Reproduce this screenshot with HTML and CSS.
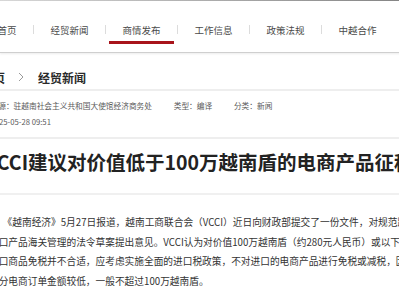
FILE: index.html
```html
<!DOCTYPE html>
<html lang="zh-CN">
<head>
<meta charset="utf-8">
<title>VCCI建议对价值低于100万越南盾的电商产品征税</title>
<link rel="stylesheet" href="styles.css">
</head>
<body>
<div class="topline"></div>
<nav class="nav">
  <div class="nav-inner">
    <a class="nav-item">首页</a>
    <span class="sep"></span>
    <a class="nav-item">经贸新闻</a>
    <span class="sep"></span>
    <a class="nav-item active">商情发布</a>
    <span class="sep"></span>
    <a class="nav-item">工作信息</a>
    <span class="sep"></span>
    <a class="nav-item">政策法规</a>
    <span class="sep"></span>
    <a class="nav-item">中越合作</a>
  </div>
</nav>
<main class="page">
  <div class="crumb">
    <span class="crumb-home">首页</span>
    <svg class="chev" width="6" height="10" viewBox="0 0 6 10"><polyline points="1,1 5,5 1,9" fill="none" stroke="#9a9a9a" stroke-width="1"/></svg>
    <span class="crumb-cur">经贸新闻</span>
  </div>
  <div class="meta">
    <div class="meta-row">
      <span class="meta-item">来源：驻越南社会主义共和国大使馆经济商务处</span>
      <span class="meta-item">类型：编译</span>
      <span class="meta-item">分类：新闻</span>
    </div>
    <div class="meta-row">2025-05-28 09:51</div>
  </div>
  <h1 class="title">VCCI建议对价值低于100万越南盾的电商产品征税</h1>
  <div class="content">
    <p>《越南经济》5月27日报道，越南工商联合会（VCCI）近日向财政部提交了一份文件，对规范跨境电商<br>进口产品海关管理的法令草案提出意见。VCCI认为对价值100万越南盾（约280元人民币）或以下的跨境电商<br>进口商品免税并不合适，应考虑实施全面的进口税政策，不对进口的电商产品进行免税或减税，因为大<br>部分电商订单金额较低，一般不超过100万越南盾。</p>
  </div>
</main>
</body>
</html>
```

FILE: styles.css
```css
html, body {
  margin: 0;
  padding: 0;
  background: #fff;
  overflow: hidden;
}
body {
  font-family: "Noto Sans CJK SC", "Noto Sans", sans-serif;
  color: #333;
  width: 1200px;
}
.topline {
  height: 1px;
  background: linear-gradient(to right, #d8d8d8, #444 60%, #333);
}
.nav {
  height: 51px;
  border-bottom: 1px solid #cfcfcf;
  box-shadow: 0 1px 2px rgba(0,0,0,0.08);
}
.nav-inner {
  display: flex;
  align-items: center;
  height: 100%;
  box-sizing: border-box;
  padding-top: 6px;
  margin-left: -19px;
}
.nav-item {
  position: relative;
  display: flex;
  align-items: center;
  height: 100%;
  padding: 0 16.5px;
  font-size: 9.5px;
  color: #4a4a4a;
  white-space: nowrap;
}
.nav-item.active::after {
  content: "";
  position: absolute;
  left: 3px;
  right: 3px;
  bottom: 8px;
  height: 3px;
  background: #a8141b;
}
.sep {
  width: 1px;
  height: 9px;
  background: #dcdcdc;
}
.page {
  margin-left: -30px;
}
.crumb {
  height: 36px;
  box-sizing: border-box;
  padding-top: 12px;
  padding-left: 11px;
  display: flex;
  align-items: center;
  font-size: 12px;
  font-weight: bold;
  color: #2a2a2a;
}
.chev {
  margin: 0 14px 0 13px;
}
.meta {
  border-top: 2px solid #eeeeee;
  border-bottom: 2px solid #eeeeee;
  padding: 7px 0 7px 20.5px;
  font-size: 7.7px;
  color: #5a5a5a;
}
.meta-row {
  line-height: 16px;
  white-space: nowrap;
}
.meta-item {
  margin-right: 20px;
}
.title {
  margin: 0;
  padding: 8px 0 16px 15px;
  font-size: 19.5px;
  line-height: 30px;
  font-weight: bold;
  color: #222;
  white-space: nowrap;
  border-bottom: 2px solid #f0f0f0;
}
.content {
  padding-left: 19px;
  padding-top: 18px;
}
.content p {
  margin: 0;
  font-size: 9.7px;
  line-height: 19.6px;
  text-indent: 1.4em;
  color: #333;
  white-space: nowrap;
}
```
